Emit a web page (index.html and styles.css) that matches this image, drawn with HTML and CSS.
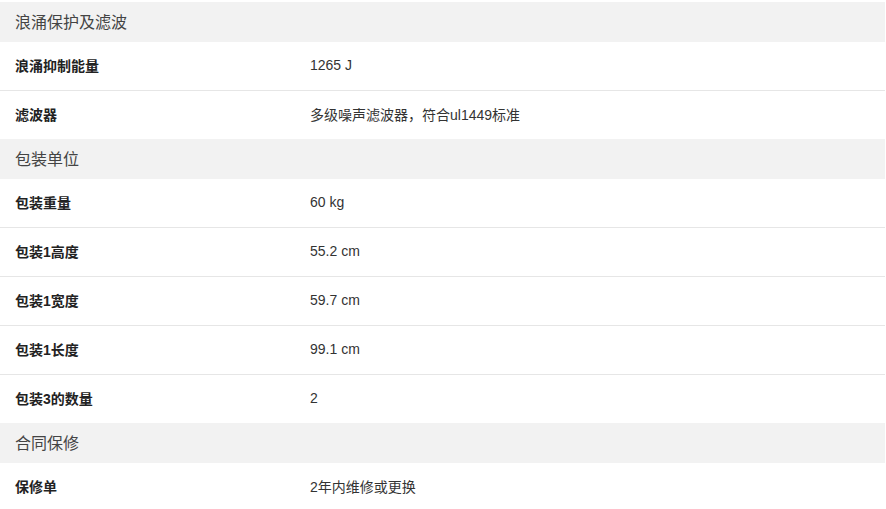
FILE: index.html
```html
<!DOCTYPE html>
<html lang="zh-CN">
<head>
<meta charset="utf-8">
<link rel="stylesheet" href="styles.css">
</head>
<body>
<div class="spec">
  <div class="group">
    <div class="section">浪涌保护及滤波</div>
    <div class="row"><div class="label">浪涌抑制能量</div><div class="value">1265 J</div></div>
    <div class="row"><div class="label">滤波器</div><div class="value">多级噪声滤波器，符合ul1449标准</div></div>
  </div>
  <div class="group">
    <div class="section">包装单位</div>
    <div class="row"><div class="label">包装重量</div><div class="value">60 kg</div></div>
    <div class="row"><div class="label">包装1高度</div><div class="value">55.2 cm</div></div>
    <div class="row"><div class="label">包装1宽度</div><div class="value">59.7 cm</div></div>
    <div class="row"><div class="label">包装1长度</div><div class="value">99.1 cm</div></div>
    <div class="row"><div class="label">包装3的数量</div><div class="value">2</div></div>
  </div>
  <div class="group">
    <div class="section">合同保修</div>
    <div class="row"><div class="label">保修单</div><div class="value">2年内维修或更换</div></div>
  </div>
</div>
</body>
</html>
```
FILE: styles.css
```css
html, body {
  margin: 0;
  padding: 0;
  background: #fff;
}
body {
  padding-top: 2px;
  font-family: "Liberation Sans", "Noto Sans CJK SC", sans-serif;
  color: #333;
}
.spec {
  width: 885px;
  display: flex;
  flex-direction: column;
}
.group {
  display: flex;
  flex-direction: column;
}
.section {
  height: 40px;
  display: flex;
  align-items: center;
  padding-left: 15px;
  padding-bottom: 2px;
  box-sizing: border-box;
  background: #f2f2f2;
  font-size: 16px;
  color: #444;
}
.row {
  height: 48px;
  display: flex;
  align-items: center;
  border-bottom: 1px solid #e6e6e6;
  font-size: 14px;
}
.row .label, .row .value {
  margin-top: -2px;
}
.row:last-child {
  border-bottom: none;
}
.label {
  width: 295px;
  padding-left: 15px;
  font-weight: bold;
  color: #222;
}
.value {
  flex: 1;
  color: #333;
}
```
